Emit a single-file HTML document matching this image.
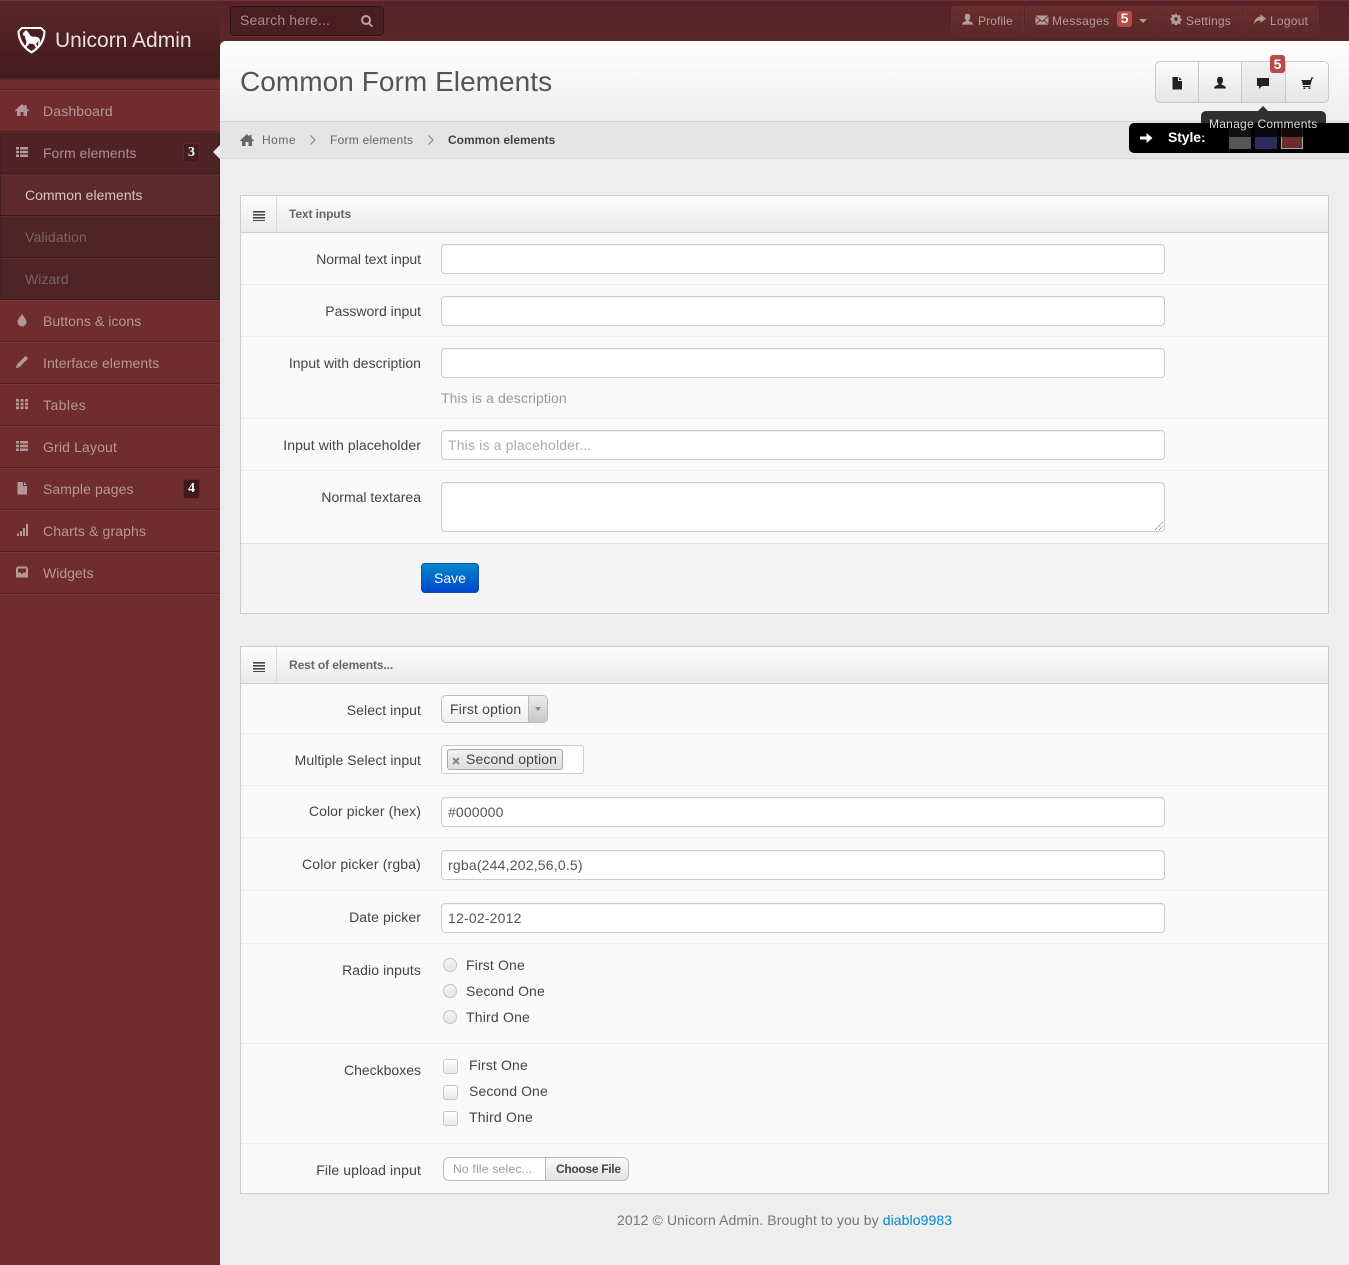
<!DOCTYPE html>
<html><head><meta charset="utf-8"><title>Common Form Elements</title>
<style>
*{box-sizing:border-box}
html,body{margin:0;padding:0;width:1349px;height:1265px;overflow:hidden;background:#6f2d2f}
body{position:relative;font:14px/20px "Liberation Sans",Arial,sans-serif;color:#444}
.a{position:absolute}
.t{position:absolute;white-space:nowrap;line-height:20px}
svg.i{position:absolute;fill:currentColor;width:14px;height:14px}
.row{position:absolute;left:0;width:220px;height:42px;background:#6f2d2f;border-bottom:1px solid #5a2022;box-shadow:inset 0 1px 0 #783638}
.row .t{left:43px;top:11px;color:#b59799}
.row svg.i{left:15px;top:13px;color:#b59799}
.sub .t{left:25px}
.sub,.act{box-shadow:inset 0 1px 0 #5a2a2c,inset 1px 0 0 #432022,inset -1px 0 0 #432022;border-bottom:1px solid #3f1b1d}
.bd{position:absolute;left:183px;width:17px;height:20px;border-radius:3px;background:#451d1f;border:1px solid #5c2a2c;color:#fff;font:bold 14px/18px "Liberation Serif",serif;text-align:center}
.top{position:absolute;top:6px;height:30px;background:linear-gradient(#6b2e2e,#5a2828);box-shadow:inset 0 0 0 1px rgba(120,60,60,.25);color:#b59a9a;font-size:12px}
.top .t{top:5px;letter-spacing:.25px}
.top svg.i{top:7px;color:#b59a9a;width:13px;height:13px}
.box{position:absolute;left:240px;width:1089px;background:#f9f9f9;border:1px solid #cdcdcd}
.bh{position:absolute;left:0;top:0;width:1087px;height:37px;background:linear-gradient(#fdfdfd,#eaeaea);border-bottom:1px solid #cdcdcd}
.bh i{position:absolute;left:35px;top:0;width:1px;height:36px;background:#dcdcdc}
.bh b{position:absolute;left:48px;top:8px;font-size:12px;color:#666;letter-spacing:-.1px}
.lines{position:absolute;left:12px;top:15px;width:12px;height:10px;background:repeating-linear-gradient(#444 0,#444 1px,#8a8a8a 1px,#8a8a8a 2px,transparent 2px,transparent 3px)}
.sep{position:absolute;left:241px;width:1087px;height:1px;background:#eee}
.l{position:absolute;left:241px;width:180px;text-align:right;line-height:20px;color:#444;white-space:nowrap}
.in{position:absolute;left:441px;width:724px;height:30px;background:#fff;border:1px solid #ccc;border-radius:4px;box-shadow:inset 0 1px 1px rgba(0,0,0,.06);padding:0 6px;line-height:29px;color:#555;font-size:14px}
.rd{position:absolute;left:443px;width:14px;height:14px;border-radius:50%;border:1px solid #c4c4c4;background:linear-gradient(#f4f4f4,#e6e6e6)}
.cb{position:absolute;left:443px;width:15px;height:15px;border-radius:3px;border:1px solid #c6c6c6;background:linear-gradient(#fff,#e8e8e8)}
.bg{position:absolute;top:61px;height:42px;background:linear-gradient(#fbfbfb,#e6e6e6);border:1px solid #c9c9c9;color:#222}
.bg svg.i{top:14px}
</style></head><body>
<svg width="0" height="0" style="position:absolute"><defs>
<symbol id="home" viewBox="0 0 14 14"><path d="M7 1 0 7.5l1 1L2 7.600V13h3.500V9h3v4H12V7.600l1 .9 1-1-2.500-2.300V2h-2v1.800z"/></symbol>
<symbol id="list" viewBox="0 0 14 14"><path d="M1 2h3v2.500H1zM5 2h8v2.500H5zM1 5.800h3v2.500H1zM5 5.800h8v2.500H5zM1 9.500h3V12H1zM5 9.500h8V12H5z"/></symbol>
<symbol id="drop" viewBox="0 0 14 14"><path d="M7 .5C6 3.500 2.500 6 2.500 9a4.500 4.500 0 0 0 9 0C11.500 6 8 3.500 7 .5z"/></symbol>
<symbol id="pen" viewBox="0 0 14 14"><path d="M10.500.8 13.200 3.500 4.500 12 .8 13.200 2 9.500z"/></symbol>
<symbol id="th" viewBox="0 0 14 14"><path d="M1 2h3v2.600H1zM5.500 2h3v2.600h-3zM10 2h3v2.600h-3zM1 5.800h3v2.600H1zM5.500 5.800h3v2.600h-3zM10 5.800h3v2.600h-3zM1 9.500h3v2.600H1zM5.500 9.500h3v2.600h-3zM10 9.500h3v2.600h-3z"/></symbol>
<symbol id="file" viewBox="0 0 14 14"><path d="M2.500 1H8v4h4v8.500H2.500zM9 1l3 3H9z"/></symbol>
<symbol id="sig" viewBox="0 0 14 14"><path d="M2 10.500h2V13H2zM5 8h2v5H5zM8 5h2v8H8zM11 1h2v12h-2z"/></symbol>
<symbol id="inbox" viewBox="0 0 14 14"><path d="M2.500 1.500h9L13 3v9.500H1V3zM3 3.500v4h2.500L7 9.500l1.500-2H11v-4z"/></symbol>
<symbol id="user" viewBox="0 0 14 14"><path d="M7 .8c2 0 3 1.500 3 3.400 0 1.800-.8 3-1.500 3.600v1c2 .6 4.500 1.400 4.500 3.700H1c0-2.300 2.500-3.100 4.500-3.700v-1C4.800 7.200 4 6 4 4.200 4 2.300 5 .8 7 .8z"/></symbol>
<symbol id="mail" viewBox="0 0 14 14"><path d="M.5 2.500h13L7 8zM.5 3.800 4.500 7 .5 11zM13.500 3.800 9.500 7l4 4zM5.300 7.800 7 9.200l1.700-1.400 4.500 3.900H.8z"/></symbol>
<symbol id="cog" viewBox="0 0 14 14"><path fill-rule="evenodd" d="M5.800 1h2.400l.3 1.700 1 .4 1.400-1 1.700 1.700-1 1.400.4 1 1.700.3v2.400l-1.700.3-.4 1 1 1.400-1.700 1.700-1.400-1-1 .4-.3 1.700H5.800l-.3-1.700-1-.4-1.400 1-1.700-1.700 1-1.400-.4-1L.3 8.200V5.800L2 5.500l.4-1-1-1.400 1.700-1.700 1.400 1 1-.4zM7 5a2 2 0 1 0 0 4 2 2 0 0 0 0-4z"/></symbol>
<symbol id="share" viewBox="0 0 14 14"><path d="M8 1.500 14 6 8 10.500V8C4.500 8 2.500 9.500 .8 12.500 1.200 7.500 4 4 8 4z"/></symbol>
<symbol id="search" viewBox="0 0 14 14"><path fill="none" stroke="currentColor" stroke-width="2" d="M6 2a4 4 0 1 0 0 8 4 4 0 0 0 0-8z"/><path d="M9 8.200 13 12l-1.300 1.300L8 9.500z"/></symbol>
<symbol id="cmt" viewBox="0 0 14 14"><path d="M1 2h12v8H6l-3 3v-3H1z"/></symbol>
<symbol id="cart" viewBox="0 0 14 14"><path d="M1 4h9.500l.8-2.500H13.500V2.600H12.200L10.500 9H3L2 5.500zM3 10h7.500v1H3zM3.500 11.500h1.800v1.500H3.500zM8.500 11.500h1.800v1.500H8.500z"/></symbol>
<symbol id="arrow" viewBox="0 0 14 14"><path d="M1 5.500h6.500V2L13.500 7 7.500 12V8.500H1z"/></symbol>
</defs></svg>

<!-- topbar -->
<div class="a" style="left:0;top:0;width:1349px;height:41px;background:linear-gradient(#5f2628,#57232a 4%,#5a2627);border-top:1px solid #6e3234"></div>
<div class="a" style="left:0;top:0;width:220px;height:79px;background:linear-gradient(#5a2527,#431b1d);border-top:1px solid #6e3234;border-bottom:0"></div>
<div class="a" style="left:0;top:78px;width:220px;height:2px;background:#5a2325"></div>
<div class="a" style="left:0;top:80px;width:220px;height:10px;background:#6f2d2f;border-bottom:1px solid #5a2022"></div>

<svg class="a" style="left:17px;top:26px" width="29" height="28" viewBox="0 0 29 28"><path fill="#fff" d="M4.500 1h20l4 4C28.500 15 23 23 14.500 27.500 6 23 .5 15 .5 5z"/><path fill="#4c1f21" d="M5.300 3h18.400l2.800 2.800C26 14 21.300 21 14.500 25 7.700 21 3 14 2.500 5.800z"/><path fill="#fff" d="M6 7 9 4l1.500 1.500C12 7 13 10 15 10.500c3 .5 5.500 0 7 1.500 1.500 2 1 5 0 7l-1-.5c.5-2 .5-3.500 0-4 0 1.500-1 2.500-2 3l1.500 3.500-1.500.5-2.500-3.500-4-.5-2 2.500L8 22l-1-1 2-2.500.5-3.500C8.500 13.500 8 12 8 10H6.500z"/></svg>
<div class="t" style="left:55px;top:28px;font-size:21px;line-height:26px;color:#e8e0e0">Unicorn Admin</div>

<!-- search -->
<div class="a" style="left:230px;top:6px;width:154px;height:30px;background:#4a1d1f;border:1px solid #331416;border-radius:4px;box-shadow:0 1px 0 #6a3133"></div>
<div class="t" style="left:240px;top:10px;color:#a78d8e;font-size:14px;letter-spacing:.15px">Search here...</div>
<svg class="i" style="left:360px;top:14px;color:#b5a5a5;width:14px;height:14px"><use href="#search"/></svg>

<!-- top nav -->
<div class="top" style="left:951px;width:73px;border-radius:4px 0 0 4px"><svg class="i" style="left:10px"><use href="#user"/></svg><span class="t" style="left:27px;letter-spacing:.1px">Profile</span></div>
<div class="top" style="left:1025px;width:133px"><svg class="i" style="left:10px;width:14px;height:14px"><use href="#mail"/></svg><span class="t" style="left:27px;letter-spacing:.35px">Messages</span>
<span class="a" style="left:92px;top:5px;width:15px;height:16px;background:#b94a48;border-radius:3px;color:#fff;text-align:center;font-size:14px;font-weight:bold;line-height:15px">5</span>
<span class="a" style="left:114px;top:13px;border:4px solid transparent;border-top-color:#b59a9a;border-bottom:0"></span></div>
<div class="top" style="left:1159px;width:83px"><svg class="i" style="left:11px;width:12px;height:12px"><use href="#cog"/></svg><span class="t" style="left:27px;letter-spacing:.2px">Settings</span></div>
<div class="top" style="left:1243px;width:76px;border-radius:0 4px 4px 0"><svg class="i" style="left:10px"><use href="#share"/></svg><span class="t" style="left:27px">Logout</span></div>

<!-- sidebar -->
<div class="a" style="left:0;top:594px;width:220px;height:671px;background:#6f2d2f;border-top:1px solid #7a3638"></div>
<div class="row" style="top:90px"><svg class="i"><use href="#home"/></svg><span class="t" style="letter-spacing:.15px">Dashboard</span></div>
<div class="row act" style="top:132px;background:#4f2224"><svg class="i"><use href="#list"/></svg><span class="t" style="color:#ad8f90">Form elements</span></div>
<div class="bd" style="top:143px">3</div>
<div class="row sub" style="top:174px;background:#5d2a2c"><span class="t" style="color:#d4c4c4">Common elements</span></div>
<div class="row sub" style="top:216px;background:#4f2425"><span class="t" style="color:#7d6060;letter-spacing:.15px">Validation</span></div>
<div class="row sub" style="top:258px;background:#4f2425"><span class="t" style="color:#7d6060">Wizard</span></div>
<div class="row" style="top:300px"><svg class="i"><use href="#drop"/></svg><span class="t" style="letter-spacing:.07px">Buttons &amp; icons</span></div>
<div class="row" style="top:342px"><svg class="i"><use href="#pen"/></svg><span class="t" style="letter-spacing:.06px">Interface elements</span></div>
<div class="row" style="top:384px"><svg class="i"><use href="#th"/></svg><span class="t" style="letter-spacing:.45px">Tables</span></div>
<div class="row" style="top:426px"><svg class="i"><use href="#list"/></svg><span class="t" style="letter-spacing:.15px">Grid Layout</span></div>
<div class="row" style="top:468px"><svg class="i"><use href="#file"/></svg><span class="t" style="letter-spacing:.09px">Sample pages</span></div>
<div class="bd" style="top:479px;background:#3d191b">4</div>
<div class="row" style="top:510px"><svg class="i"><use href="#sig"/></svg><span class="t" style="letter-spacing:.13px">Charts &amp; graphs</span></div>
<div class="row" style="top:552px"><svg class="i"><use href="#inbox"/></svg><span class="t">Widgets</span></div>

<!-- content -->
<div class="a" style="left:220px;top:41px;width:1129px;height:1224px;background:#eee;border-radius:6px 0 0 0"></div>
<div class="a" style="left:220px;top:41px;width:1129px;height:81px;background:linear-gradient(#fff,#ededed);border-radius:6px 0 0 0"></div>
<div class="a" style="left:220px;top:121px;width:1129px;height:38px;background:#e5e5e5;border-top:1px solid #d6d6d6;border-bottom:1px solid #d8d8d8"></div>
<div class="a" style="left:213px;top:145px;border:7px solid transparent;border-left:0;border-right:7px solid #eee"></div>

<div class="t" style="left:240px;top:64px;font-size:28px;line-height:36px;color:#555;letter-spacing:.05px">Common Form Elements</div>

<!-- breadcrumb -->
<svg class="i" style="left:240px;top:133px;color:#666"><use href="#home"/></svg>
<div class="t" style="left:262px;top:130px;font-size:12px;color:#666;letter-spacing:.5px">Home</div>
<svg class="a" style="left:309px;top:134px" width="8" height="12"><path d="M1.500 1.500 6 6l-4.500 4.500" fill="none" stroke="#888" stroke-width="1.200"/></svg>
<div class="t" style="left:330px;top:130px;font-size:12px;color:#666;letter-spacing:.25px">Form elements</div>
<svg class="a" style="left:427px;top:134px" width="8" height="12"><path d="M1.500 1.500 6 6l-4.500 4.500" fill="none" stroke="#888" stroke-width="1.200"/></svg>
<div class="t" style="left:448px;top:130px;font-size:12px;font-weight:bold;color:#444">Common elements</div>

<!-- button group -->
<div class="bg" style="left:1155px;width:44px;border-radius:5px 0 0 5px"><svg class="i" style="left:14px"><use href="#file"/></svg></div>
<div class="bg" style="left:1198px;width:44px"><svg class="i" style="left:14px"><use href="#user"/></svg></div>
<div class="bg" style="left:1241px;width:45px;background:linear-gradient(#f2f2f2,#e2e2e2)"><svg class="i" style="left:14px"><use href="#cmt"/></svg></div>
<div class="bg" style="left:1285px;width:44px;border-radius:0 5px 5px 0"><svg class="i" style="left:14px"><use href="#cart"/></svg></div>
<div class="a" style="left:1270px;top:55px;width:15px;height:18px;background:#b94a48;border-radius:3px;color:#fff;font-size:14px;font-weight:bold;line-height:18px;text-align:center">5</div>

<!-- style bar + tooltip -->
<div class="a" style="left:1129px;top:123px;width:220px;height:30px;background:#000;border-radius:5px 0 0 5px"></div>
<svg class="i" style="left:1139px;top:131px;color:#fff"><use href="#arrow"/></svg>
<div class="t" style="left:1168px;top:127px;font-weight:bold;color:#fff;letter-spacing:-.1px">Style:</div>
<div class="a" style="left:1229px;top:128px;width:22px;height:21px;background:#555"></div>
<div class="a" style="left:1255px;top:128px;width:22px;height:21px;background:#2b2d5c"></div>
<div class="a" style="left:1281px;top:128px;width:22px;height:21px;background:#6a2c2e;border:1px solid #aaa;border-top:0"></div>
<div class="a" style="left:1201px;top:111px;width:125px;height:26px;background:rgba(0,0,0,.8);border-radius:5px"></div>
<div class="a" style="left:1258px;top:106px;border:5px solid transparent;border-top:0;border-bottom-color:rgba(0,0,0,.8)"></div>
<div class="t" style="left:1209px;top:114px;font-size:12px;color:#ddd;letter-spacing:.25px">Manage Comments</div>

<!-- box 1 -->
<div class="box" style="top:195px;height:419px"><div class="bh"><i></i><span class="lines"></span><b>Text inputs</b></div></div>
<div class="sep" style="top:284px"></div><div class="sep" style="top:336px"></div><div class="sep" style="top:418px"></div><div class="sep" style="top:470px"></div>
<div class="a" style="left:241px;top:543px;width:1087px;height:70px;background:#f5f5f5;border-top:1px solid #e6e6e6"></div>

<div class="l" style="top:249px;letter-spacing:-.06px">Normal text input</div><div class="in" style="top:244px"></div>
<div class="l" style="top:301px">Password input</div><div class="in" style="top:296px"></div>
<div class="l" style="top:353px;letter-spacing:.03px">Input with description</div><div class="in" style="top:348px"></div>
<div class="t" style="left:441px;top:388px;color:#999;letter-spacing:.1px">This is a description</div>
<div class="l" style="top:435px;letter-spacing:.07px">Input with placeholder</div><div class="in" style="top:430px;color:#aaa;letter-spacing:.17px">This is a placeholder...</div>
<div class="l" style="top:487px">Normal textarea</div><div class="in" style="top:482px;height:50px"></div>
<svg class="a" style="left:1155px;top:522px" width="9" height="9"><path d="M0 8 8 0M4 8l4-4" stroke="#666" stroke-width="1" stroke-dasharray="1 1" fill="none"/></svg>
<div class="a" style="left:421px;top:563px;width:58px;height:30px;border-radius:4px;background:linear-gradient(#0088cc,#0044cc);border:1px solid #0a50a8;color:#fff;text-align:center;line-height:28px">Save</div>

<!-- box 2 -->
<div class="box" style="top:646px;height:548px"><div class="bh"><i></i><span class="lines"></span><b>Rest of elements...</b></div></div>
<div class="sep" style="top:733px"></div><div class="sep" style="top:785px"></div><div class="sep" style="top:837px"></div><div class="sep" style="top:890px"></div><div class="sep" style="top:943px"></div><div class="sep" style="top:1043px"></div><div class="sep" style="top:1143px"></div>

<div class="l" style="top:700px;letter-spacing:.09px">Select input</div>
<div class="a" style="left:441px;top:695px;width:107px;height:28px;border:1px solid #bbb;border-radius:5px;background:linear-gradient(#fff,#eee);color:#444;padding-left:8px;line-height:26px;letter-spacing:.17px">First option</div>
<div class="a" style="left:528px;top:696px;width:19px;height:26px;background:linear-gradient(#ececec,#c8c8c8);border-left:1px solid #bbb;border-radius:0 4px 4px 0"></div>
<div class="a" style="left:535px;top:707px;border:3px solid transparent;border-top:4px solid #888;border-bottom:0"></div>

<div class="l" style="top:750px;letter-spacing:.05px">Multiple Select input</div>
<div class="a" style="left:441px;top:745px;width:143px;height:29px;background:#fff;border:1px solid #ccc;border-radius:3px"></div>
<div class="a" style="left:447px;top:749px;width:116px;height:21px;background:linear-gradient(#f2f2f2,#dcdcdc);border:1px solid #aaa;border-radius:3px;color:#444;padding-left:18px;line-height:19px;letter-spacing:.12px">Second option</div>
<svg class="a" style="left:452px;top:757px" width="8" height="8"><path d="M1 1l6 6M7 1 1 7" stroke="#888" stroke-width="2"/></svg>

<div class="l" style="top:801px;letter-spacing:.09px">Color picker (hex)</div><div class="in" style="top:797px;letter-spacing:.15px">#000000</div>
<div class="l" style="top:854px;letter-spacing:.16px">Color picker (rgba)</div><div class="in" style="top:850px;letter-spacing:.2px">rgba(244,202,56,0.5)</div>
<div class="l" style="top:907px;letter-spacing:.1px">Date picker</div><div class="in" style="top:903px;letter-spacing:.2px">12-02-2012</div>

<div class="l" style="top:960px;letter-spacing:.09px">Radio inputs</div>
<div class="rd" style="top:958px"></div><div class="t" style="left:466px;top:955px;letter-spacing:.15px">First One</div>
<div class="rd" style="top:984px"></div><div class="t" style="left:466px;top:981px;letter-spacing:.1px">Second One</div>
<div class="rd" style="top:1010px"></div><div class="t" style="left:466px;top:1007px;letter-spacing:.2px">Third One</div>

<div class="l" style="top:1060px">Checkboxes</div>
<div class="cb" style="top:1059px"></div><div class="t" style="left:469px;top:1055px;letter-spacing:.15px">First One</div>
<div class="cb" style="top:1085px"></div><div class="t" style="left:469px;top:1081px;letter-spacing:.1px">Second One</div>
<div class="cb" style="top:1111px"></div><div class="t" style="left:469px;top:1107px;letter-spacing:.2px">Third One</div>

<div class="l" style="top:1160px;letter-spacing:.12px">File upload input</div>
<div class="a" style="left:443px;top:1157px;width:186px;height:24px;background:#fff;border:1px solid #bbb;border-radius:6px;overflow:hidden">
<span class="t" style="left:9px;top:1px;font-size:12px;color:#999;letter-spacing:.25px">No file selec...</span>
<span class="a" style="left:101px;top:0;width:84px;height:22px;background:linear-gradient(#fafafa,#e2e2e2);border-left:1px solid #bbb"></span>
<span class="t" style="left:112px;top:1px;font-size:12px;font-weight:bold;color:#444;letter-spacing:-.3px">Choose File</span></div>

<div class="t" style="left:617px;top:1210px;color:#777;letter-spacing:.1px">2012 © Unicorn Admin. Brought to you by <span style="color:#0088cc">diablo9983</span></div>
</body></html>
